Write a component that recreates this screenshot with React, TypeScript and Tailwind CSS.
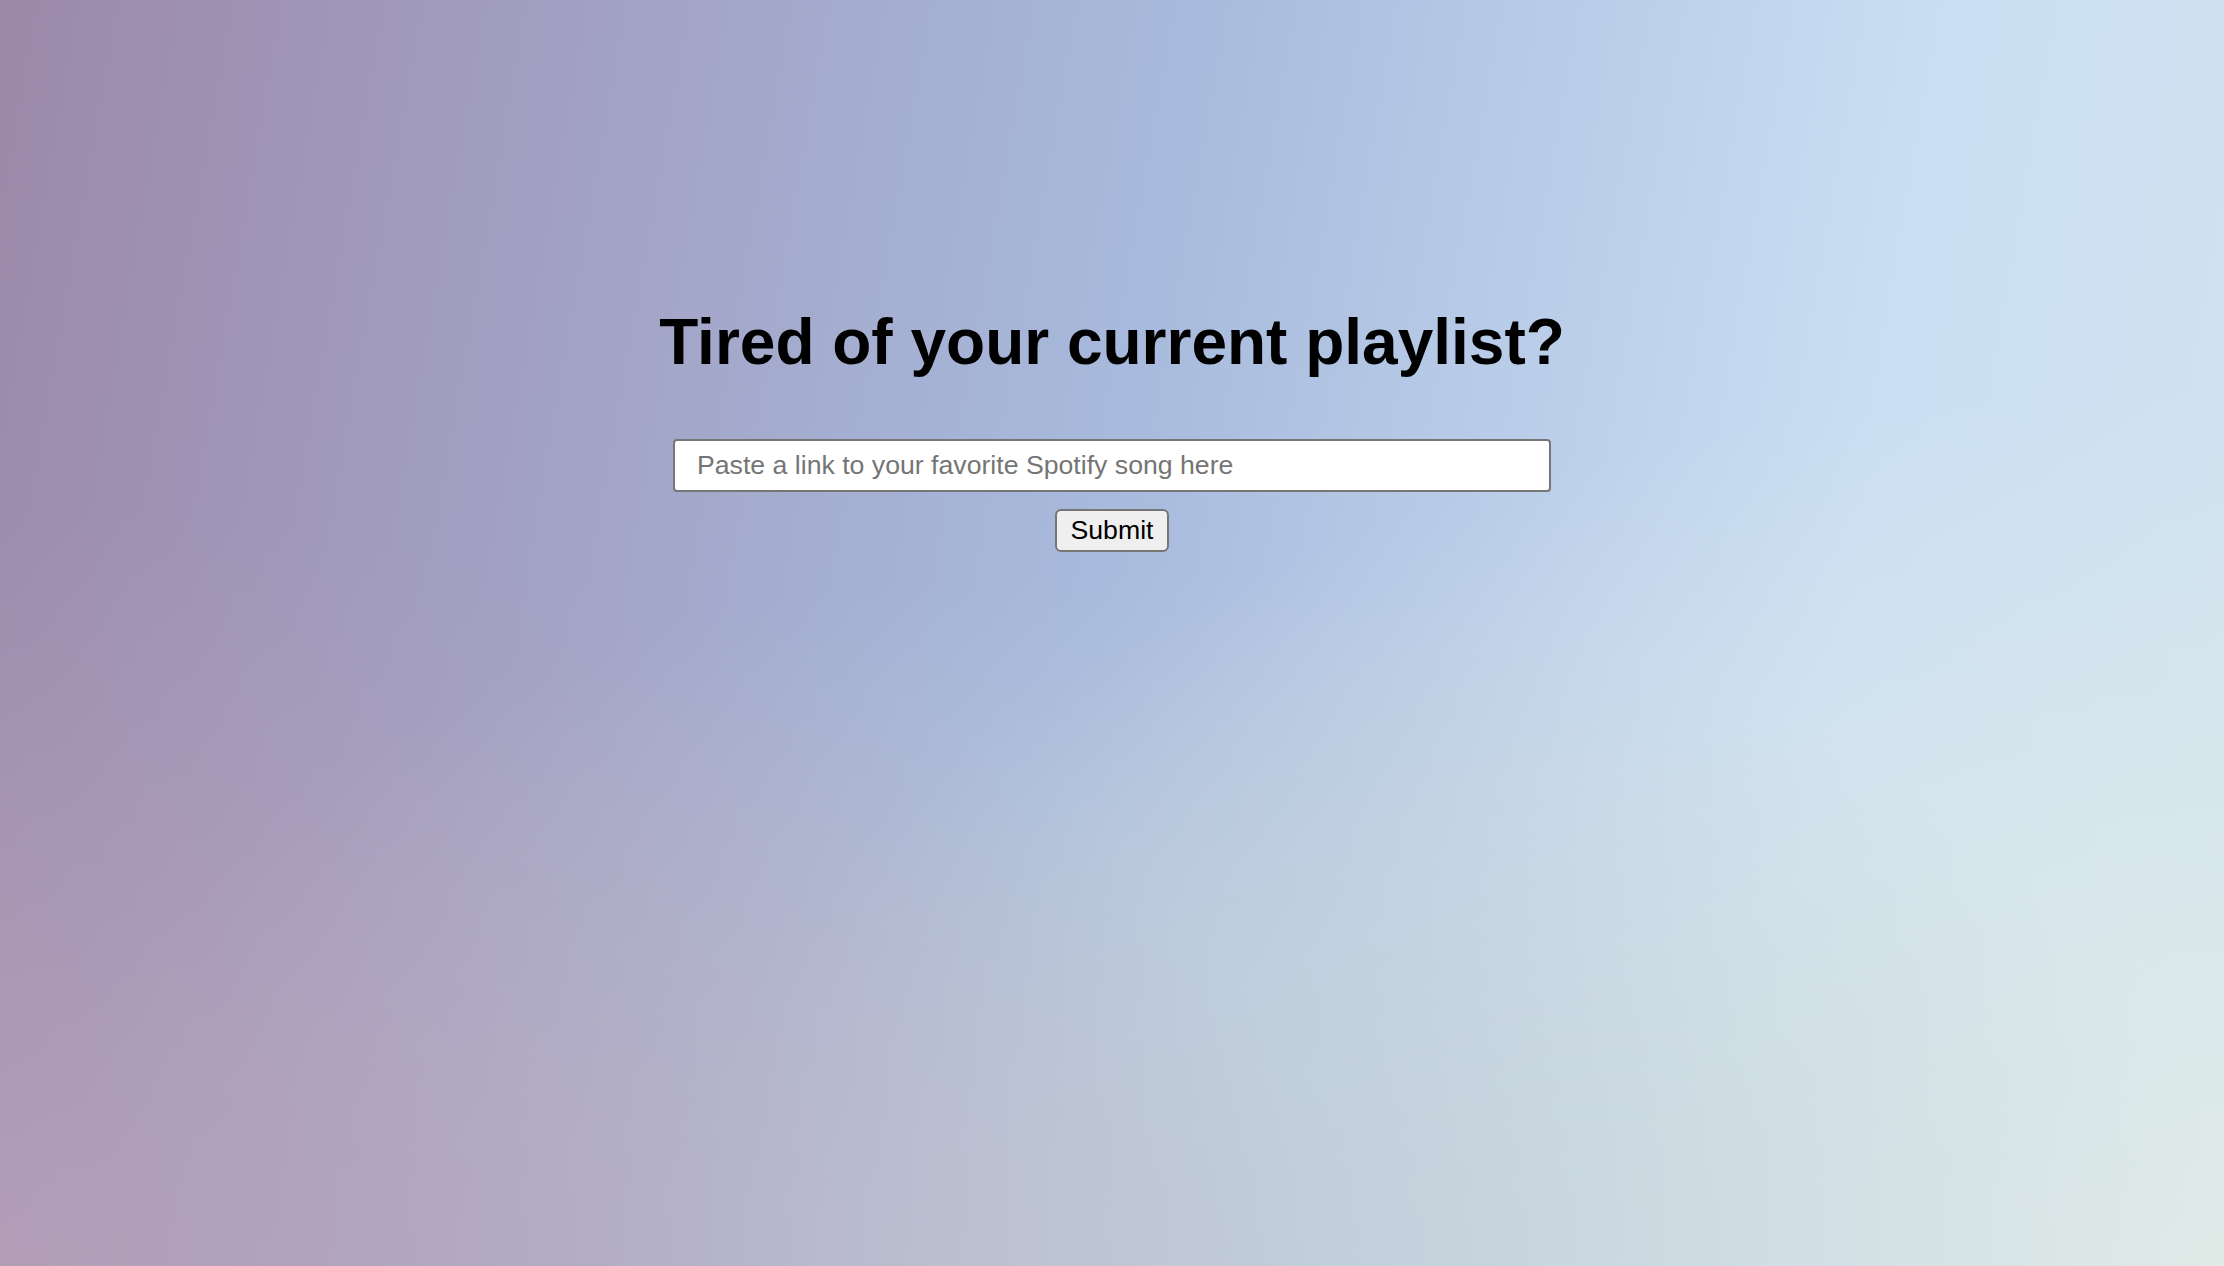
export default function App() {
  return (
    <div className="min-h-screen w-full bg-[radial-gradient(ellipse_60%_60%_at_0%_100%,rgba(182,160,184,0.85),transparent),radial-gradient(ellipse_50%_55%_at_50%_100%,rgba(192,204,214,0.9),transparent),radial-gradient(ellipse_70%_70%_at_100%_100%,rgba(224,235,232,1),transparent),linear-gradient(100deg,#9c88a9_0%,#a7b9dc_48%,#cadff3_80%,#d0e3ef_100%)] font-['Liberation_Sans',Arial,sans-serif] text-black">
      <div className="flex flex-col items-center pt-[305px]">
        <h1 className="text-[64px] font-bold leading-[74px]">
          Tired of your current playlist?
        </h1>
        <form className="mt-[60px] flex flex-col items-center gap-[17px]">
          <input
            type="text"
            placeholder="Paste a link to your favorite Spotify song here"
            className="h-[53px] w-[878px] rounded-[4px] border-2 border-[#767676] bg-white px-[22px] text-[26.67px] text-black outline-none placeholder:text-[#757575]"
          />
          <button
            type="button"
            className="h-[43px] rounded-[6px] border-2 border-[#767676] bg-[#efefef] px-[14px] text-[26.67px] leading-none text-black"
          >
            Submit
          </button>
        </form>
      </div>
    </div>
  );
}
